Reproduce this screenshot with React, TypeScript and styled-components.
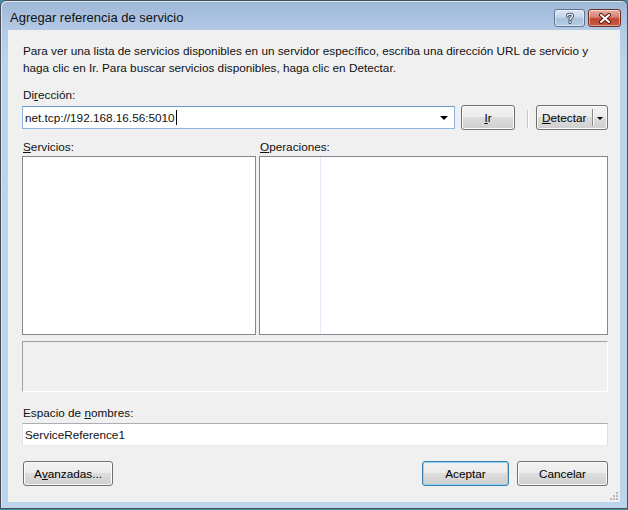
import React from 'react';
import styled, { createGlobalStyle } from 'styled-components';

const Global = createGlobalStyle`
  html, body {
    margin: 0;
    padding: 0;
    background: #3f8ea4;
  }
  body {
    font-family: "Liberation Sans", Arial, sans-serif;
  }
`;

const Window = styled.div`
  width: 626px;
  height: 507px;
  border: 1px solid #4a4f57;
  border-radius: 6px 6px 0 0;
  background: linear-gradient(to bottom, #9db7d8 0px, #b4cbe6 30px, #bcd3ec 60px, #bdd4ed 100%);
  display: flex;
  flex-direction: column;
  box-shadow: inset 1px 1px 0 #d8e6f5;
`;

const TitleBar = styled.div`
  height: 29px;
  display: flex;
  align-items: center;
  padding: 0 6px 0 9px;
`;

const Title = styled.div`
  flex: 1;
  font-size: 13px;
  color: #111;
  padding-top: 3px;
`;

const CaptionButton = styled.div<{ $variant: 'help' | 'close' }>`
  width: ${(p) => (p.$variant === 'close' ? 31 : 29)}px;
  height: 16px;
  margin-top: 5px;
  margin-left: ${(p) => (p.$variant === 'close' ? 3 : 0)}px;
  border: 1px solid ${(p) => (p.$variant === 'close' ? '#6e2e24' : '#62748d')};
  border-radius: 3px;
  background: ${(p) =>
    p.$variant === 'close'
      ? 'linear-gradient(to bottom, #e8b0a6 0%, #d47f6e 45%, #c0452e 55%, #c85a41 100%)'
      : 'linear-gradient(to bottom, #dce7f4 0%, #c4d5ea 45%, #a9c0dd 55%, #b8cde6 100%)'};
  box-shadow: inset 0 0 0 1px rgba(255, 255, 255, 0.45);
  display: flex;
  align-items: center;
  justify-content: center;
`;

const Client = styled.div`
  flex: 1;
  margin: 0 7px 6px 7px;
  background: #f0f0f0;
  padding: 12px 12px 0 14px;
  display: flex;
  flex-direction: column;
  position: relative;
  font-size: 11.75px;
  color: #111;
`;

const Intro = styled.p`
  margin: 0;
  line-height: 17px;
  padding-left: 1px;
`;

const Label = styled.div<{ $top?: number }>`
  margin-top: ${(p) => p.$top ?? 0}px;
  line-height: 17px;
  padding-left: 1px;
`;

const AddressRow = styled.div`
  display: flex;
  align-items: stretch;
  height: 25px;
  margin-top: 2px;
`;

const Combo = styled.div`
  flex: 1;
  display: flex;
  align-items: center;
  border: 1px solid #8db4dc;
  border-top-color: #6a9acb;
  background: #fff;
  padding-left: 2px;
  margin: 1px 0;
`;

const ComboText = styled.span`
  flex: 1;
`;

const Caret = styled.span`
  display: inline-block;
  width: 1px;
  height: 15px;
  background: #000;
  vertical-align: -3px;
  margin-left: 1px;
`;

const Arrow = styled.span`
  width: 0;
  height: 0;
  border-left: 4px solid transparent;
  border-right: 4px solid transparent;
  border-top: 4px solid #000;
  margin: 1px 6px 0 6px;
`;

const Button = styled.div<{ $w: number; $default?: boolean }>`
  width: ${(p) => p.$w}px;
  box-sizing: border-box;
  height: 25px;
  border: 1px solid ${(p) => (p.$default ? '#3c7fb1' : '#707070')};
  border-radius: 3px;
  background: linear-gradient(to bottom, #f2f2f2 0%, #ebebeb 49%, #dddddd 50%, #cfcfcf 100%);
  box-shadow: inset 0 0 0 1px ${(p) => (p.$default ? '#8fd0f5' : '#fcfcfc')};
  display: flex;
  align-items: center;
  justify-content: center;
  color: #000;
`;

const SplitButton = styled(Button)`
  justify-content: flex-start;
  padding-left: 5px;
`;

const SplitLabel = styled.span`
  flex: 1;
`;

const SplitDivider = styled.span`
  align-self: stretch;
  width: 1px;
  margin: 3px 0;
  background: #8a8a8a;
  box-shadow: 1px 0 0 #fbfbfb;
`;

const SmallArrow = styled(Arrow)`
  border-left-width: 3px;
  border-right-width: 3px;
  border-top-width: 3px;
  margin: 1px 4px 0 4px;
`;

const Separator = styled.div`
  width: 1px;
  margin: 5px 8px 2px 12px;
  background: #c8c8c8;
  box-shadow: 1px 0 0 #ffffff;
`;

const Lists = styled.div`
  display: grid;
  grid-template-columns: 234px 1fr;
  grid-template-rows: 17px 179px;
  column-gap: 3px;
  row-gap: 1px;
  margin-top: 8px;
`;

const ListBox = styled.div`
  border: 1px solid #828790;
  background: #fff;
  display: flex;
`;

const ColumnGuide = styled.div`
  width: 60px;
  border-right: 1px solid #e3ecf9;
`;

const InfoPanel = styled.div`
  height: 49px;
  margin-top: 6px;
  border: 1px solid #a0a0a0;
  border-right-color: #fff;
  border-bottom-color: #fff;
`;

const TextBox = styled.div`
  height: 21px;
  margin-top: 2px;
  border: 1px solid #abadb3;
  border-left-color: #e2e3ea;
  border-right-color: #dbdfe6;
  border-bottom-color: #e3e9ef;
  background: #fff;
  display: flex;
  align-items: center;
  padding-left: 2px;
`;

const Footer = styled.div`
  display: flex;
  gap: 8px;
  margin-top: 15px;
`;

const Spacer = styled.div`
  flex: 1;
`;

const Grip = styled.svg`
  position: absolute;
  right: 2px;
  bottom: 2px;
`;

const Key = styled.u`
  text-underline-offset: 1px;
`;

const HelpGlyph = () => (
  <svg width="12" height="12" viewBox="0 0 12 12">
    <path
      d="M3.5 4 C3.5 1.5 8.5 1.5 8.5 4 C8.5 5.6 6 5.6 6 7.5 M6 9.5 L6 10.5"
      fill="none"
      stroke="#2e3d52"
      strokeWidth="3"
      strokeLinecap="round"
    />
    <path
      d="M3.5 4 C3.5 1.5 8.5 1.5 8.5 4 C8.5 5.6 6 5.6 6 7.5 M6 9.5 L6 10.5"
      fill="none"
      stroke="#ffffff"
      strokeWidth="1.4"
      strokeLinecap="round"
    />
  </svg>
);

const CloseGlyph = () => (
  <svg width="14" height="11" viewBox="0 0 14 11">
    <path d="M3 2 L11 9 M11 2 L3 9" stroke="#5a1a12" strokeWidth="4" strokeLinecap="round" />
    <path d="M3 2 L11 9 M11 2 L3 9" stroke="#ffffff" strokeWidth="2" strokeLinecap="round" />
  </svg>
);

export default function App() {
  return (
    <>
      <Global />
      <Window>
        <TitleBar>
          <Title>Agregar referencia de servicio</Title>
          <CaptionButton $variant="help">
            <HelpGlyph />
          </CaptionButton>
          <CaptionButton $variant="close">
            <CloseGlyph />
          </CaptionButton>
        </TitleBar>
        <Client>
          <Intro>
            Para ver una lista de servicios disponibles en un servidor específico, escriba una dirección URL de
            servicio y<br />
            haga clic en Ir. Para buscar servicios disponibles, haga clic en Detectar.
          </Intro>
          <Label $top={10}>
            Di<Key>r</Key>ección:
          </Label>
          <AddressRow>
            <Combo>
              <ComboText>
                net.tcp://192.168.16.56:5010
                <Caret />
              </ComboText>
              <Arrow />
            </Combo>
            <Button $w={54} style={{ marginLeft: 6 }}>
              <Key>I</Key>r
            </Button>
            <Separator />
            <SplitButton $w={72}>
              <SplitLabel>
                <Key>D</Key>etectar
              </SplitLabel>
              <SplitDivider />
              <SmallArrow />
            </SplitButton>
          </AddressRow>
          <Lists>
            <Label>
              <Key>S</Key>ervicios:
            </Label>
            <Label>
              <Key>O</Key>peraciones:
            </Label>
            <ListBox />
            <ListBox>
              <ColumnGuide />
            </ListBox>
          </Lists>
          <InfoPanel />
          <Label $top={12}>
            Espacio de <Key>n</Key>ombres:
          </Label>
          <TextBox>ServiceReference1</TextBox>
          <Footer>
            <Button $w={90} style={{ marginLeft: 1 }}>
              A<Key>v</Key>anzadas...
            </Button>
            <Spacer />
            <Button $w={87} $default>
              Aceptar
            </Button>
            <Button $w={91}>Cancelar</Button>
          </Footer>
          <Grip width="8" height="8" viewBox="0 0 8 8">
            <g fill="#b8b8b8">
              <rect x="6" y="0" width="2" height="2" />
              <rect x="3" y="3" width="2" height="2" />
              <rect x="6" y="3" width="2" height="2" />
              <rect x="0" y="6" width="2" height="2" />
              <rect x="3" y="6" width="2" height="2" />
              <rect x="6" y="6" width="2" height="2" />
            </g>
          </Grip>
        </Client>
      </Window>
    </>
  );
}
